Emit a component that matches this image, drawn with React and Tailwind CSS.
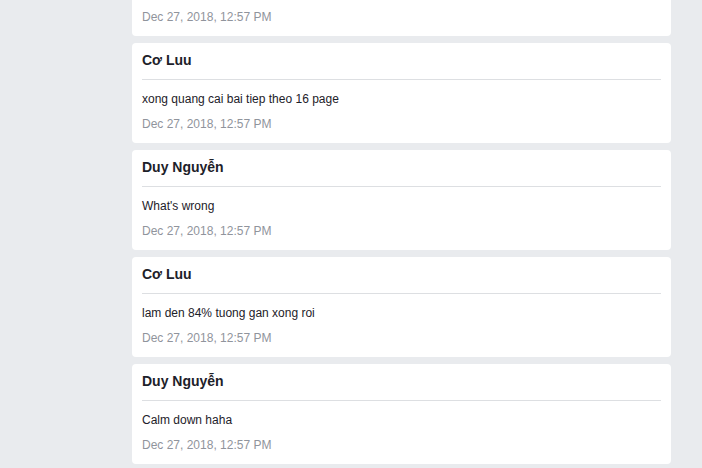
const messages = [
  { name: "Duy Nguyễn", text: "ok", time: "Dec 27, 2018, 12:57 PM" },
  { name: "Cơ Luu", text: "xong quang cai bai tiep theo 16 page", time: "Dec 27, 2018, 12:57 PM" },
  { name: "Duy Nguyễn", text: "What's wrong", time: "Dec 27, 2018, 12:57 PM" },
  { name: "Cơ Luu", text: "lam den 84% tuong gan xong roi", time: "Dec 27, 2018, 12:57 PM" },
  { name: "Duy Nguyễn", text: "Calm down haha", time: "Dec 27, 2018, 12:57 PM" },
];

const MessageCard = ({ name, text, time }) => (
  <div className="bg-white rounded-[4px] px-[10px] pt-[8px] pb-[11px]">
    <div className="pb-[10px] border-b border-[#dddfe2] text-[14px] leading-[18px] font-bold text-[#1d2129]">
      {name}
    </div>
    <div className="pt-[11px] text-[12px] leading-[16px] text-[#1d2129]">{text}</div>
    <div className="mt-[9px] text-[12px] leading-[16px] text-[#90949c]">{time}</div>
  </div>
);

export default function App() {
  return (
    <div
      className="min-h-screen h-[468px] overflow-hidden bg-[#e9ebee]"
      style={{ fontFamily: '"Liberation Sans", Arial, sans-serif' }}
    >
      <div className="ml-[132px] w-[539px] -mt-[64px] flex flex-col gap-[7px]">
        {messages.map((m, i) => (
          <MessageCard key={i} {...m} />
        ))}
      </div>
    </div>
  );
}
